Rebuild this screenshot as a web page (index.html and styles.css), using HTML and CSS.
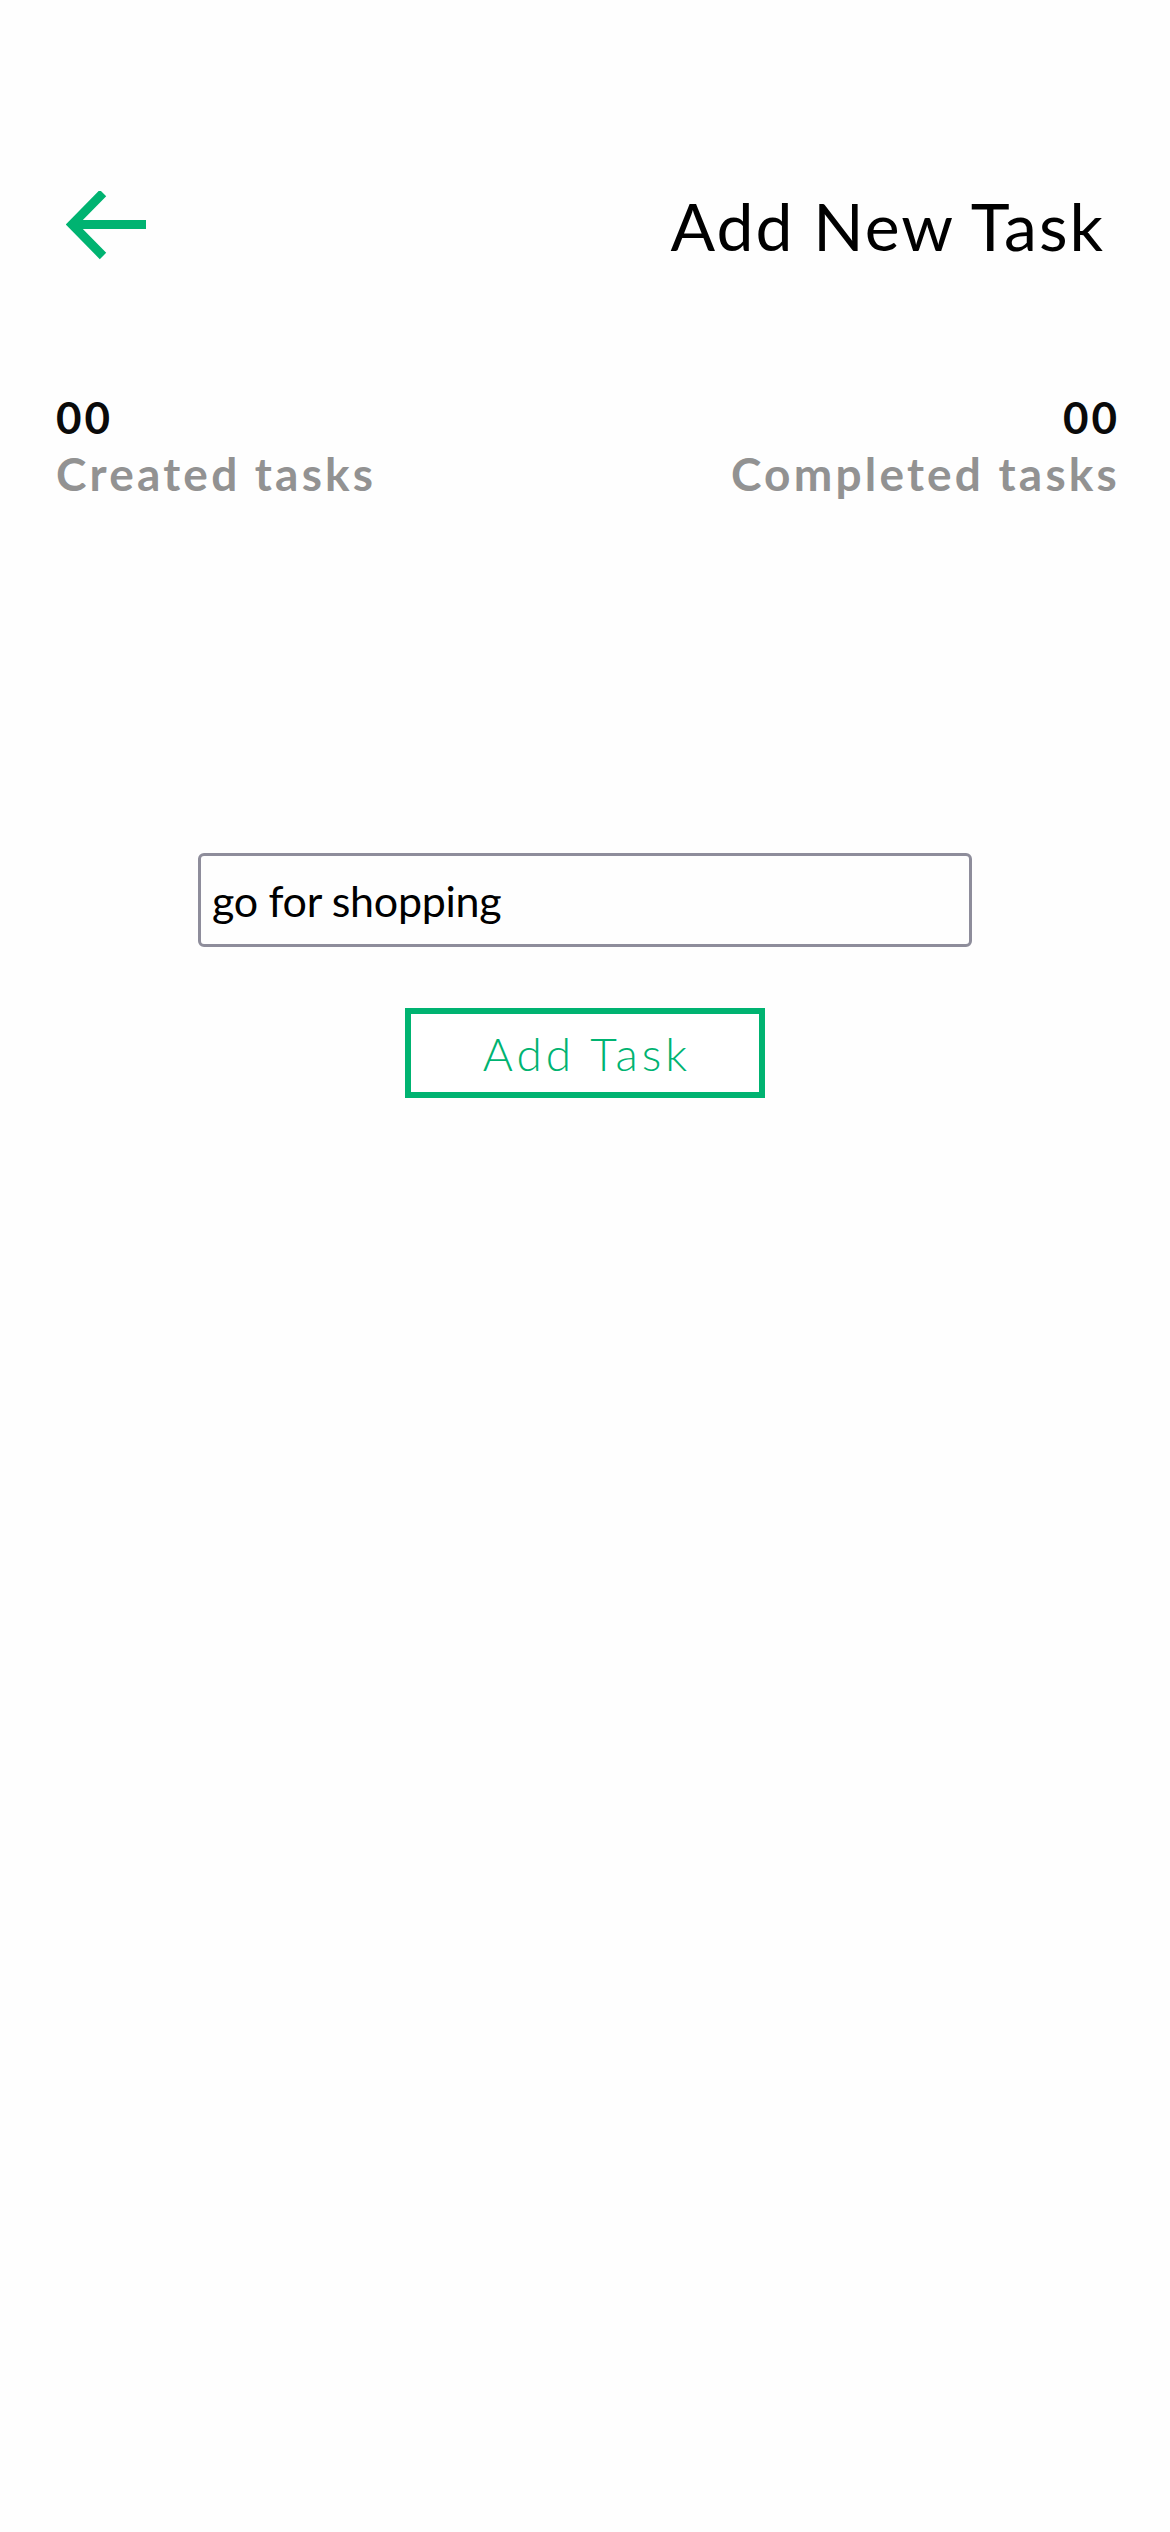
FILE: index.html
```html
<!DOCTYPE html>
<html lang="en">
<head>
<meta charset="utf-8">
<title>Add New Task</title>
<link rel="stylesheet" href="styles.css">
</head>
<body>
<div class="screen">
  <header class="header">
    <button class="back" aria-label="Back">
      <svg width="84" height="70" viewBox="0 0 84 70">
        <path d="M80 33.5 H8" stroke="#00b371" stroke-width="9" fill="none"/>
        <path d="M37 2 L6 33.5 L37 65" stroke="#00b371" stroke-width="9" fill="none"/>
      </svg>
    </button>
    <h1 class="title">Add New Task</h1>
  </header>
  <section class="stats">
    <div class="stat">
      <div class="stat-num">00</div>
      <div class="stat-label">Created tasks</div>
    </div>
    <div class="stat stat-right">
      <div class="stat-num">00</div>
      <div class="stat-label">Completed tasks</div>
    </div>
  </section>
  <section class="form">
    <div class="input">go for shopping</div>
    <button class="add-btn">Add Task</button>
  </section>
</div>
</body>
</html>
```
FILE: styles.css
```css
html, body {
  margin: 0;
  padding: 0;
  background: #fefefe;
}
.screen {
  width: 1170px;
  height: 2532px;
  font-family: "Lato", "Noto Sans", sans-serif;
  color: #000;
}
.header {
  display: flex;
  justify-content: space-between;
  align-items: center;
  padding: 180px 65px 0 66px;
  height: 92px;
}
.back {
  border: 0;
  background: none;
  padding: 0;
  display: flex;
}
.title {
  margin: 0;
  font-size: 66px;
  font-weight: 400;
  line-height: 92px;
  letter-spacing: 2px;
}
.stats {
  display: flex;
  justify-content: space-between;
  padding: 0 53px 0 56px;
  margin-top: 120px;
}
.stat-right {
  text-align: right;
}
.stat-right .stat-num,
.stat-right .stat-label {
  margin-right: -3px;
}
.stat-num {
  font-size: 44px;
  font-weight: 700;
  line-height: 50px;
  color: #0a0a0a;
  letter-spacing: 3px;
}
.stat-label {
  margin-top: 4px;
  font-size: 46px;
  font-weight: 700;
  line-height: 56px;
  color: #929292;
  letter-spacing: 3.2px;
}
.form {
  display: flex;
  flex-direction: column;
  align-items: center;
  margin-top: 351px;
}
.input {
  box-sizing: border-box;
  width: 774px;
  height: 94px;
  border: 3px solid #8e8d9b;
  border-radius: 6px;
  padding: 0 11px;
  display: flex;
  align-items: center;
  font-size: 43px;
  letter-spacing: -0.3px;
  color: #000;
}
.add-btn {
  box-sizing: border-box;
  margin-top: 61px;
  width: 360px;
  height: 90px;
  border: 6px solid #00b371;
  background: #fff;
  color: #00b371;
  font-family: inherit;
  font-size: 46px;
  font-weight: 300;
  letter-spacing: 4px;
  padding: 0 0 0 4px;
}
```
